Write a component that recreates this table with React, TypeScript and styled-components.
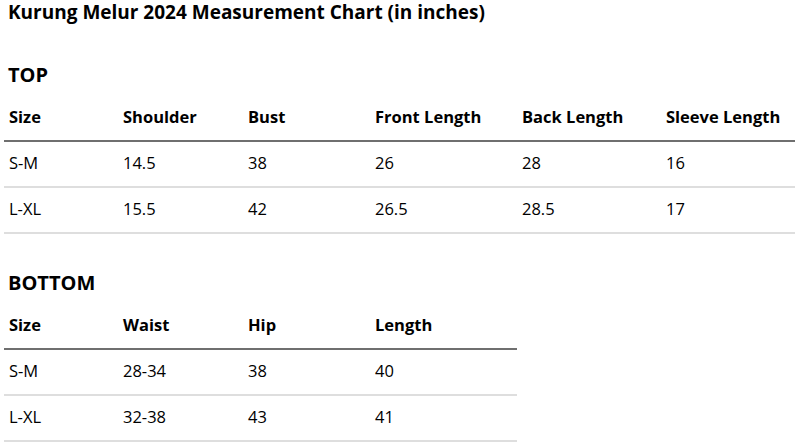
import React from "react";
import styled, { createGlobalStyle } from "styled-components";

const GlobalStyle = createGlobalStyle`
  html, body {
    margin: 0;
    padding: 0;
    background: #ffffff;
  }
  body {
    font-family: "Open Sans", "Liberation Sans", sans-serif;
    color: #000000;
  }
`;

const Page = styled.div`
  width: 800px;
  padding: 0 5px 0 4px;
  box-sizing: border-box;
`;

const Title = styled.h1`
  margin: 0;
  padding-left: 4px;
  font-size: 19px;
  font-weight: 700;
  line-height: 24px;
`;

const Section = styled.section<{ $gap: number }>`
  margin-top: ${(p) => p.$gap}px;
`;

const SectionTitle = styled.h2`
  margin: 0 0 8px 0;
  padding-left: 4px;
  font-size: 20px;
  font-weight: 700;
  line-height: 24px;
`;

const Table = styled.div<{ $cols: string }>`
  display: grid;
  grid-template-columns: ${(p) => p.$cols};
  width: max-content;
`;

const Cell = styled.div<{ $head?: boolean }>`
  display: flex;
  align-items: center;
  box-sizing: content-box;
  height: ${(p) => (p.$head ? 43 : 42)}px;
  padding: 0 0 2px 5px;
  font-size: 16.5px;
  line-height: 22px;
  font-weight: ${(p) => (p.$head ? 700 : 400)};
  border-bottom: 2px solid ${(p) => (p.$head ? "#6f6f6f" : "#dedede")};
  white-space: nowrap;
`;

const topCols = "114px 125px 127px 147px 144px 134px";
const bottomCols = "114px 125px 127px 147px";

type ChartProps = {
  heading: string;
  gap: number;
  cols: string;
  headers: string[];
  rows: string[][];
};

function Chart({ heading, gap, cols, headers, rows }: ChartProps) {
  return (
    <Section $gap={gap}>
      <SectionTitle>{heading}</SectionTitle>
      <Table $cols={cols}>
        {headers.map((h) => (
          <Cell key={h} $head>
            {h}
          </Cell>
        ))}
        {rows.map((r, i) =>
          r.map((v, j) => <Cell key={`${i}-${j}`}>{v}</Cell>)
        )}
      </Table>
    </Section>
  );
}

export default function App() {
  return (
    <Page>
      <GlobalStyle />
      <Title>Kurung Melur 2024 Measurement Chart (in inches)</Title>
      <Chart
        heading="TOP"
        gap={39}
        cols={topCols}
        headers={["Size", "Shoulder", "Bust", "Front Length", "Back Length", "Sleeve Length"]}
        rows={[
          ["S-M", "14.5", "38", "26", "28", "16"],
          ["L-XL", "15.5", "42", "26.5", "28.5", "17"],
        ]}
      />
      <Chart
        heading="BOTTOM"
        gap={37}
        cols={bottomCols}
        headers={["Size", "Waist", "Hip", "Length"]}
        rows={[
          ["S-M", "28-34", "38", "40"],
          ["L-XL", "32-38", "43", "41"],
        ]}
      />
    </Page>
  );
}
